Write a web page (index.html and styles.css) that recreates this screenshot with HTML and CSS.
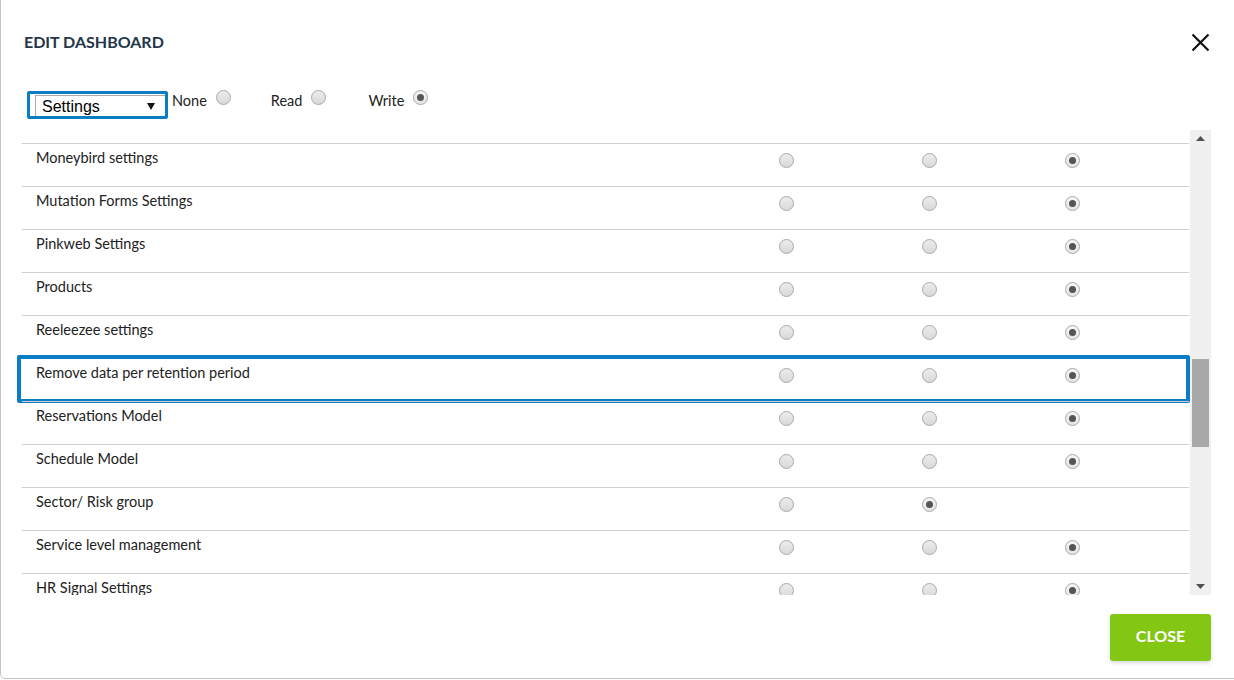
FILE: index.html
```html
<!DOCTYPE html>
<html lang="en">
<head>
    <meta charset="UTF-8">
    <meta name="viewport" content="width=device-width, initial-scale=1.0">
    <title>Edit dashboard</title>
    <link rel="stylesheet" href="styles.css">
</head>
<body>

<div class="modal">
    <div class="modal-header">
        <h2>EDIT DASHBOARD</h2>
        <button class="close-x" type="button" aria-label="Close">
            <svg width="19" height="19" viewBox="0 0 19 19">
                <path d="M1.5 1.5 L17.5 17.5 M17.5 1.5 L1.5 17.5" stroke="#111" stroke-width="2.2" fill="none"/>
            </svg>
        </button>
    </div>

    <div class="toolbar">
        <div class="select-wrap">
            <div class="select-box">
                <span>Settings</span>
                <svg width="8" height="7" viewBox="0 0 8 7"><path d="M0 0 H8 L4 7 Z" fill="#111"/></svg>
            </div>
        </div>
        <label class="option">None <span class="radio"></span></label>
        <label class="option">Read <span class="radio"></span></label>
        <label class="option">Write <span class="radio checked"></span></label>
    </div>

    <div class="scroll-area">
        <div class="rows" id="rows"></div>
        <div class="scrollbar">
            <div class="arrow">
                <svg width="9" height="5" viewBox="0 0 9 5"><path d="M0 5 L4.5 0 L9 5 Z" fill="#505050"/></svg>
            </div>
            <div class="track"><div class="thumb"></div></div>
            <div class="arrow">
                <svg width="9" height="5" viewBox="0 0 9 5"><path d="M0 0 H9 L4.5 5 Z" fill="#505050"/></svg>
            </div>
        </div>
    </div>

    <div class="modal-footer">
        <button class="btn-close" type="button">CLOSE</button>
    </div>
</div>

<script>
    // rights per module: 0 = none, 1 = read, 2 = write
    const modules = [
        ['Moneybird settings', 2],
        ['Mutation Forms Settings', 2],
        ['Pinkweb Settings', 2],
        ['Products', 2],
        ['Reeleezee settings', 2],
        ['Remove data per retention period', 2, true],
        ['Reservations Model', 2],
        ['Schedule Model', 2],
        ['Sector/ Risk group', 1, false, true],
        ['Service level management', 2],
        ['HR Signal Settings', 2]
    ];

    const rows = document.getElementById('rows');
    modules.forEach(([name, value, active, noWrite]) => {
        const row = document.createElement('div');
        row.className = 'row' + (active ? ' active' : '');

        const label = document.createElement('div');
        label.className = 'row-label';
        label.textContent = name;
        row.appendChild(label);

        for (let i = 0; i < 3; i++) {
            const cell = document.createElement('div');
            cell.className = 'row-cell';
            if (!(noWrite && i === 2)) {
                const radio = document.createElement('span');
                radio.className = 'radio' + (i === value ? ' checked' : '');
                cell.appendChild(radio);
            }
            row.appendChild(cell);
        }
        row.appendChild(document.createElement('div'));
        rows.appendChild(row);
    });
</script>

</body>
</html>
```

FILE: styles.css
```css
html, body {
    margin: 0;
    padding: 0;
    background-color: #fff;
    overflow: hidden;
}
body {
    font-family: Lato, "Open Sans", sans-serif;
    color: #222;
}
.modal {
    box-sizing: border-box;
    width: 1240px;
    height: 683px;
    margin-top: -4px;
    border: 1px solid #c4c4c4;
    border-radius: 5px;
    background-color: #fff;
    display: flex;
    flex-direction: column;
}
.modal-header {
    display: flex;
    justify-content: space-between;
    align-items: flex-start;
    padding: 35px 29px 0 23px;
}
.modal-header h2 {
    margin: 0;
    font-size: 16px;
    line-height: 20px;
    font-weight: 700;
    color: #23364a;
}
.close-x {
    border: none;
    background: none;
    padding: 0;
    margin-top: 1px;
    width: 19px;
    height: 19px;
    cursor: pointer;
}
.toolbar {
    display: flex;
    align-items: flex-start;
    padding: 39px 0 0 26px;
    height: 39px;
}
.select-wrap {
    border: 3px solid #0b7dc5;
    border-radius: 2px;
    padding: 1px 0 0 5px;
    height: 21px;
    width: 130px;
}
.select-box {
    box-sizing: border-box;
    height: 21px;
    border: 1px solid #aaa;
    border-right: none;
    border-bottom: none;
    display: flex;
    align-items: center;
    justify-content: space-between;
    padding: 1px 10px 0 6px;
    font-family: "Liberation Sans", Arial, sans-serif;
    font-size: 16px;
    color: #000;
}
.option {
    display: inline-flex;
    align-items: flex-start;
    gap: 9px;
    margin-left: 4px;
    margin-right: 36px;
    font-size: 14.5px;
    line-height: 20px;
    color: #222;
}
.option:last-child {
    margin-left: 6px;
}
.option .radio {
    margin-top: -1px;
}
.radio {
    box-sizing: border-box;
    display: inline-block;
    width: 15px;
    height: 15px;
    border-radius: 50%;
    border: 1px solid #a9a9a9;
    background: linear-gradient(#ececec, #d9d9d9);
    position: relative;
}
.radio.checked {
    background: linear-gradient(#f6f6f6, #e4e4e4);
}
.radio.checked::after {
    content: "";
    position: absolute;
    left: 3px;
    top: 3px;
    width: 7px;
    height: 7px;
    border-radius: 50%;
    background-color: #555;
}
.scroll-area {
    display: flex;
    height: 465px;
    margin-left: 13px;
    margin-right: 28px;
}
.rows {
    flex: 1;
    overflow: hidden;
    padding: 13px 1px 0 8px;
}
.row {
    display: grid;
    grid-template-columns: 1fr 143px 143px 143px 45px;
    height: 42px;
    border-top: 1px solid #cfcfcf;
    position: relative;
}
.row.active::after {
    content: "";
    position: absolute;
    top: -4px;
    bottom: -2px;
    left: -5px;
    right: -1px;
    border: 4px solid #0b7dc5;
    border-radius: 2px;
}
.row-label {
    padding: 4px 0 0 14px;
    font-size: 14.5px;
    line-height: 20px;
    color: #222;
}
.row-cell {
    display: flex;
    justify-content: center;
    padding-top: 9px;
}
.scrollbar {
    width: 21px;
    display: flex;
    flex-direction: column;
    background-color: #f0f0f0;
}
.scrollbar .arrow {
    height: 17px;
    display: flex;
    align-items: center;
    justify-content: center;
}
.scrollbar .track {
    flex: 1;
    padding: 0 2px;
}
.scrollbar .thumb {
    margin-top: 212px;
    height: 88px;
    background-color: #a8a8a8;
}
.modal-footer {
    display: flex;
    justify-content: flex-end;
    padding: 19px 28px 0 0;
}
.btn-close {
    width: 101px;
    height: 47px;
    border: none;
    border-radius: 3px;
    background-color: #83c614;
    color: #fff;
    font-family: Lato, "Open Sans", sans-serif;
    font-size: 16px;
    line-height: 44px;
    font-weight: 700;
    padding: 0 0 3px;
    box-shadow: 0 2px 4px rgba(0, 0, 0, 0.15);
    cursor: pointer;
}
```
